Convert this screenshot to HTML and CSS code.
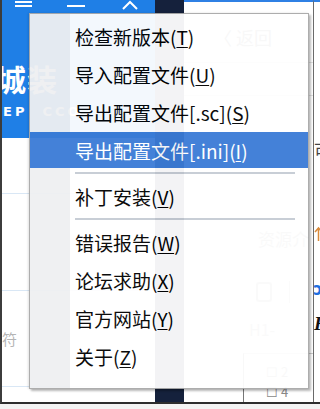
FILE: index.html
```html
<!DOCTYPE html>
<html lang="zh-CN">
<head>
<meta charset="utf-8">
<title>menu</title>
<link rel="stylesheet" href="styles.css">
</head>
<body>
<div class="desk">
  <div class="win">
    <aside class="side">
      <div class="head">
        <div class="tb">
          <span class="ham"></span>
          <span class="min"></span>
          <svg class="up" width="16" height="10" viewBox="0 0 16 10"><path d="M1 9 L8 2 L15 9" fill="none" stroke="#fff" stroke-width="2"/></svg>
        </div>
        <div class="logo">城装</div>
        <div class="logo-sub">EP&nbsp;&nbsp;CCO</div>
      </div>
      <div class="side-body">
        <div class="srow"></div>
        <div class="srow"></div>
        <div class="srow tall">符</div>
      </div>
    </aside>
    <div class="navy"></div>
    <main class="main">
      <div class="back">〈 返回</div>
      <div class="mline"></div>
      <div class="mline"></div>
      <div class="res">资源介</div>
      <div class="tools"><span class="clip"></span><span class="bar"></span></div>
      <div class="tools2"><span class="h1">H1-</span></div>
      <div class="box"><div class="cb">☐ 2</div><div class="cb">☐ 4</div></div>
    </main>
    <div class="pane">
      <div class="pk">可</div>
      <svg class="caret" width="9" height="16" viewBox="0 0 9 16"><path d="M1 6 L4.5 2 L8 6 M4.5 2 V15" fill="none" stroke="#d98a3a" stroke-width="1.5"/></svg>
      <div class="redo">ɔ</div>
      <div class="it">F</div>
    </div>
  </div>

  <div class="menu">
    <div class="item"><span class="t">检查新版本(<u>T</u>)</span></div>
    <div class="item"><span class="t">导入配置文件(<u>U</u>)</span></div>
    <div class="item"><span class="t">导出配置文件[.sc](<u>S</u>)</span></div>
    <div class="item active"><span class="t">导出配置文件[.ini](<u>I</u>)</span></div>
    <div class="sep"></div>
    <div class="item"><span class="t">补丁安装(<u>V</u>)</span></div>
    <div class="sep"></div>
    <div class="item"><span class="t">错误报告(<u>W</u>)</span></div>
    <div class="item"><span class="t">论坛求助(<u>X</u>)</span></div>
    <div class="item"><span class="t">官方网站(<u>Y</u>)</span></div>
    <div class="item"><span class="t">关于(<u>Z</u>)</span></div>
  </div>
</div>
</body>
</html>
```
FILE: styles.css
```css
* { box-sizing: border-box; }
html, body { margin: 0; padding: 0; }
body {
  width: 320px;
  height: 409px;
  overflow: hidden;
  background: #f4f4f4;
  font-family: "Noto Sans CJK SC", "Noto Sans", sans-serif;
}
.desk {
  position: relative;
  width: 320px;
  height: 409px;
}
.win {
  display: flex;
  width: 320px;
  height: 404px;
  background: #fff;
  border-left: 2px solid #3c3c3c;
  border-bottom: 2px solid #2e2e2e;
}
.side {
  width: 153px;
  display: flex;
  flex-direction: column;
}
.head {
  height: 138px;
  background: #1f7fe6;
  color: #fff;
  overflow: hidden;
}
.tb {
  display: flex;
  align-items: center;
  height: 12px;
  padding-left: 13px;
}
.ham {
  width: 17px;
  height: 6px;
  border-top: 2px solid #fff;
  border-bottom: 2px solid #fff;
  margin-top: -4px;
}
.min {
  width: 18px;
  height: 2px;
  background: #fff;
  margin-left: 35px;
}
.up { margin-left: 37px; margin-top: -2px; }
.logo {
  margin-top: 50px;
  margin-left: -6px;
  font-size: 30px;
  line-height: 32px;
  font-weight: 700;
  letter-spacing: 1px;
}
.logo-sub {
  margin-top: 10px;
  font-size: 13px;
  font-weight: 700;
  letter-spacing: 3px;
  font-family: "DejaVu Sans", sans-serif;
  margin-left: 1px;
}
.side-body {
  flex: 1;
  display: flex;
  flex-direction: column;
}
.srow {
  height: 56px;
  border-bottom: 1px solid #d9e7f5;
}
.srow + .srow { height: 97px; }
.srow.tall {
  height: 96px;
  display: flex;
  align-items: center;
  font-size: 15px;
  color: #b5b5b5;
}
.navy {
  width: 29px;
  background: #15213c;
}
.main {
  width: 129px;
  border-top: 2px solid #2f80e4;
  display: flex;
  flex-direction: column;
  color: #333;
}
.back {
  margin-top: 24px;
  margin-left: 30px;
  font-size: 18px;
  line-height: 22px;
  color: #777;
}
.mline {
  margin-top: 14px;
  height: 1px;
  background: #e2e2e2;
}
.mline + .mline { margin-top: 32px; }
.res {
  margin-top: 130px;
  margin-left: 74px;
  font-size: 17px;
  color: #999;
}
.tools {
  display: flex;
  align-items: center;
  margin-top: 30px;
  margin-left: 72px;
  height: 22px;
}
.clip {
  width: 16px;
  height: 20px;
  border: 2px solid #aaa;
  border-radius: 3px;
}
.bar {
  width: 1px;
  height: 22px;
  background: #bbb;
  margin-left: 17px;
}
.tools2 {
  display: flex;
  align-items: center;
  margin-top: 14px;
  margin-left: 65px;
  font-size: 16px;
}
.h1 { color: #aaa; }
.box {
  margin-top: 12px;
  margin-left: 59px;
  flex: 1;
  border-left: 1px solid #777;
  border-top: 1px solid #ccc;
  padding: 8px 0 0 22px;
  font-size: 13px;
  color: #888;
}
.cb { line-height: 20px; }
.pane {
  flex: 1;
  border-top: 2px solid #2f80e4;
  border-left: 1px solid #6a6a6a;
  display: flex;
  flex-direction: column;
  align-items: flex-start;
  overflow: hidden;
}
.pk {
  margin-top: 138px;
  font-size: 17px;
  line-height: 20px;
  color: #444;
  white-space: nowrap;
}
.caret { margin-top: 66px; }
.redo {
  margin-top: 36px;
  margin-left: -1px;
  color: #1e6fe0;
  font-size: 18px;
  line-height: 18px;
  font-weight: 700;
}
.it {
  margin-top: 18px;
  font-style: italic;
  font-weight: 700;
  color: #111;
  font-family: "Liberation Serif", serif;
  font-size: 19px;
  line-height: 20px;
}

.menu {
  position: absolute;
  left: 29px;
  top: 13px;
  width: 280px;
  height: 376px;
  border: 1px solid #a9a9a9;
  padding-top: 2px;
  background: linear-gradient(to right, #eff0f2 0, #eff0f2 40px, #fff 40px);
  box-shadow: 2px 2px 2px rgba(0,0,0,.28), -1px 0 2px rgba(0,0,0,.12);
  opacity: 0.95;
}
.item {
  height: 36px;
  margin: 2px 0;
  padding-left: 45px;
  display: flex;
  align-items: center;
  font-size: 19px;
  color: #000;
  white-space: nowrap;
}
.item u { text-underline-offset: 2px; text-decoration-thickness: 1px; }
.item.active {
  background: #3a7bd6;
  color: #fff;
}
.sep {
  height: 6px;
  margin-left: 45px;
  margin-right: 13px;
  display: flex;
  align-items: center;
}
.sep::before {
  content: "";
  flex: 1;
  height: 2px;
  background: #c6ccd4;
}
```
